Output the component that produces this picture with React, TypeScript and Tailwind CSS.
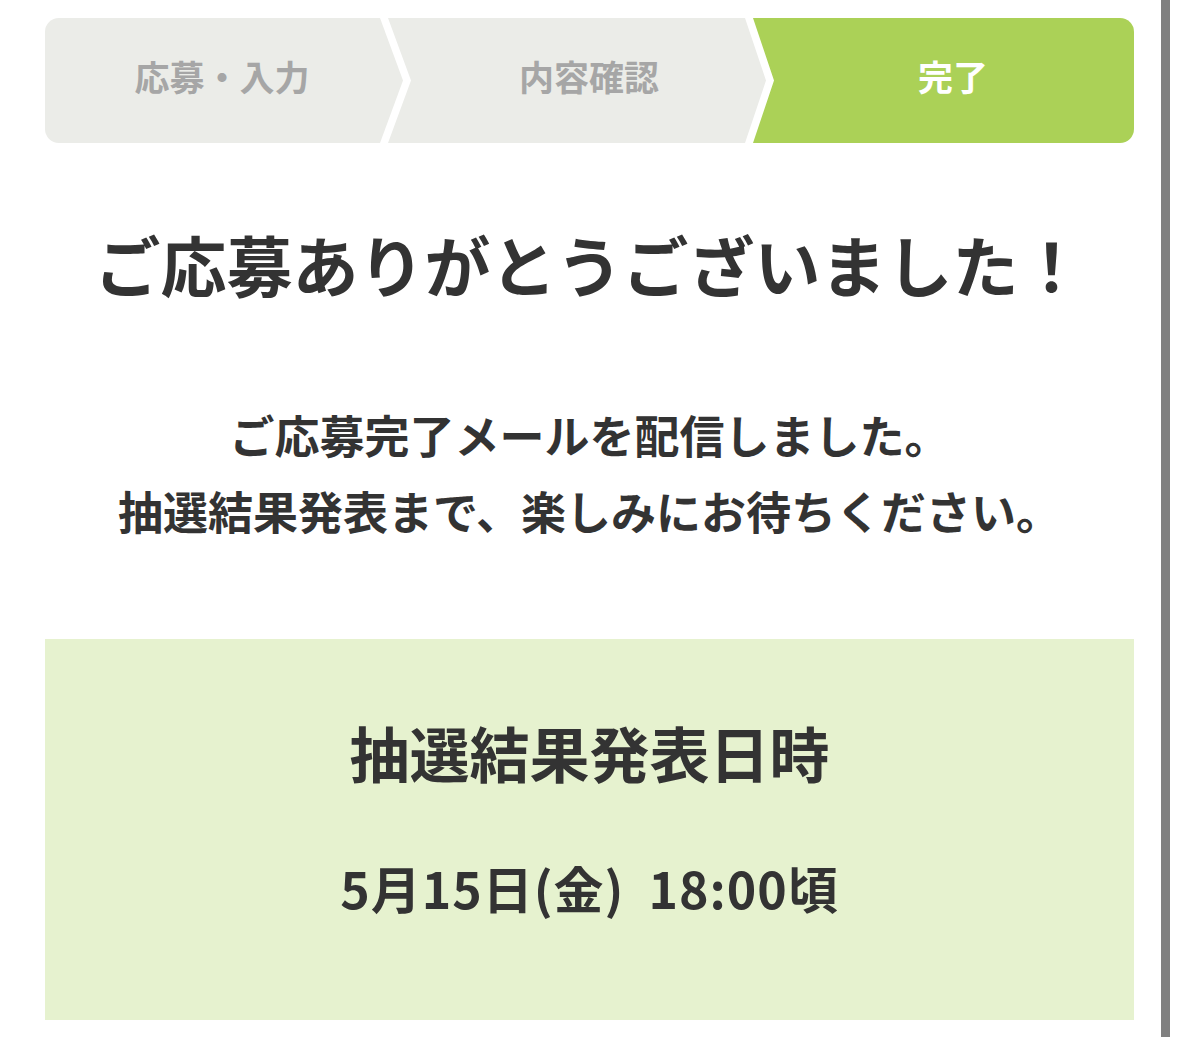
const steps = [
  { label: '応募・入力', active: false },
  { label: '内容確認', active: false },
  { label: '完了', active: true },
];

function Stepper() {
  return (
    <div className="flex h-[125px] rounded-[14px] overflow-hidden">
      <div className="w-[358px] shrink-0 flex items-center justify-center pr-[4px] pb-[8px] bg-[#ebece8] text-[#a6a6a6] [clip-path:polygon(0_0,calc(100%-23px)_0,100%_50%,calc(100%-23px)_100%,0_100%)]">
        {steps[0].label}
      </div>
      <div className="w-[378px] shrink-0 -ml-[15px] flex items-center justify-center pl-[24px] pb-[8px] bg-[#ebece8] text-[#a6a6a6] [clip-path:polygon(0_0,calc(100%-21px)_0,100%_50%,calc(100%-21px)_100%,0_100%,23px_50%)]">
        {steps[1].label}
      </div>
      <div className="flex-1 -ml-[13px] flex items-center justify-center pl-[19px] pb-[8px] bg-[#abd157] text-white [clip-path:polygon(0_0,100%_0,100%_100%,0_100%,21px_50%)]">
        {steps[2].label}
      </div>
    </div>
  );
}

export default function App() {
  return (
    <div
      className="flex bg-white h-[1037px] overflow-hidden text-[#333333]"
      style={{ fontFamily: '"Noto Sans CJK JP", "Noto Sans", sans-serif' }}
    >
      <main className="ml-[45px] w-[1089px] shrink-0 pt-[18px]">
        <div className="text-[35px] font-bold">
          <Stepper />
        </div>

        <h1 className="mt-[72px] text-center text-[66px] leading-[96px] font-bold">
          ご応募ありがとうございました！
        </h1>

        <p className="mt-[86px] text-center text-[45px] leading-[76px] font-bold">
          ご応募完了メールを配信しました。
          <br />
          抽選結果発表まで、楽しみにお待ちください。
        </p>

        <section className="mt-[90px] bg-[#e6f2cf] pt-[68px] pb-[97px] text-center">
          <h2 className="text-[60px] leading-[90px] font-bold">抽選結果発表日時</h2>
          <p className="mt-[54px] text-[50px] leading-[72px] font-bold tracking-[0.02em]">
            5月15日(金)<span className="inline-block w-[24px]" />18:00頃
          </p>
        </section>
      </main>
      <div className="ml-[27px] w-[9px] shrink-0 bg-[#808080]" />
    </div>
  );
}
